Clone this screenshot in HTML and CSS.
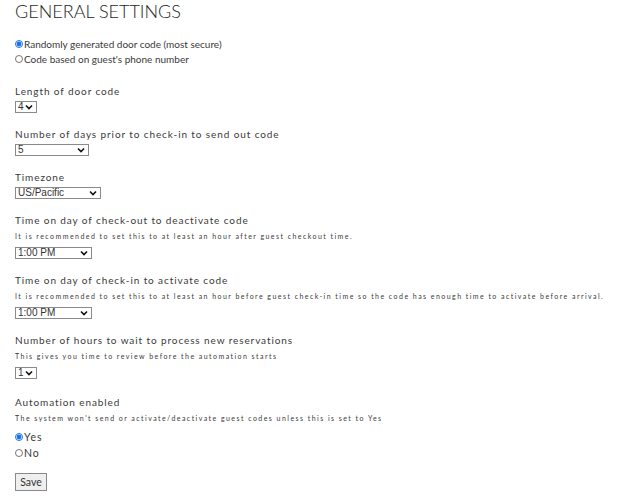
FILE: index.html
```html
<!DOCTYPE html>
<html>
  <head>
    <link rel="stylesheet" href="styles.css">
  </head>
  <body>
    <div class="settings">
      <h1>GENERAL SETTINGS</h1>

      <div class="choices top-choices">
        <label class="choice"><input type="radio" name="codetype" checked>Randomly generated door code (most secure)</label>
        <label class="choice"><input type="radio" name="codetype">Code based on guest's phone number</label>
      </div>

      <div class="field">
        <div class="label">Length of door code</div>
        <select class="sel sel-xs"><option>4</option></select>
      </div>

      <div class="field">
        <div class="label">Number of days prior to check-in to send out code</div>
        <select class="sel sel-md"><option>5</option></select>
      </div>

      <div class="field">
        <div class="label">Timezone</div>
        <select class="sel sel-lg"><option>US/Pacific</option></select>
      </div>

      <div class="field">
        <div class="label">Time on day of check-out to deactivate code</div>
        <div class="hint">It is recommended to set this to at least an hour after guest checkout time.</div>
        <select class="sel sel-time"><option>1:00 PM</option></select>
      </div>

      <div class="field">
        <div class="label">Time on day of check-in to activate code</div>
        <div class="hint">It is recommended to set this to at least an hour before guest check-in time so the code has enough time to activate before arrival.</div>
        <select class="sel sel-time"><option>1:00 PM</option></select>
      </div>

      <div class="field">
        <div class="label">Number of hours to wait to process new reservations</div>
        <div class="hint">This gives you time to review before the automation starts</div>
        <select class="sel sel-xs"><option>1</option></select>
      </div>

      <div class="field auto">
        <div class="label">Automation enabled</div>
        <div class="hint">The system won't send or activate/deactivate guest codes unless this is set to Yes</div>
        <div class="choices spaced">
          <label class="choice"><input type="radio" name="auto" checked>Yes</label>
          <label class="choice"><input type="radio" name="auto">No</label>
        </div>
      </div>

      <button class="save">Save</button>
    </div>
  </body>
</html>
```

FILE: styles.css
```css
/* reset */
* { margin: 0; padding: 0; box-sizing: border-box; }

body {
  background: white;
  color: #3a3a3a;
  font-family: "Lato", "Noto Sans", sans-serif;
}

.settings { padding: 0 15px; }

h1 {
  font-size: 18px;
  font-weight: 300;
  line-height: 22px;
  color: #1e1e1e;
  letter-spacing: 0;
}

/* radio rows */
.choices { display: flex; flex-direction: column; }
.top-choices { margin-top: 14px; }
.choice {
  display: flex;
  align-items: center;
  height: 15px;
  font-size: 10px;
}
.spaced .choice { height: 16px; letter-spacing: 1px; font-size: 10.5px; }
.choice input {
  width: 8px;
  height: 8px;
  margin: 0 1px 0 0;
  accent-color: #1a73e8;
}

/* fields */
.field { margin-top: 14px; }
.top-choices + .field { margin-top: 18px; }
.auto { margin-top: 16px; }
.label {
  font-size: 10px;
  line-height: 14px;
  letter-spacing: 0.9px;
  margin-bottom: 3px;
}
.hint {
  font-size: 7px;
  line-height: 10px;
  letter-spacing: 1.45px;
  margin: 4px 0 6px;
}

.sel {
  display: block;
  appearance: none;
  height: 12px;
  border: 1px solid #8a8a8a;
  border-radius: 0;
  background: white url("data:image/svg+xml,%3Csvg xmlns='http://www.w3.org/2000/svg' width='8' height='6'%3E%3Cpath d='M1 1.5l3 3 3-3' fill='none' stroke='%23111' stroke-width='1.6'/%3E%3C/svg%3E") no-repeat right 3px center;
  font-family: "Liberation Sans", sans-serif;
  font-size: 10px;
  line-height: 10px;
  padding: 0 0 0 2px;
  color: #333;
}
.sel-xs { width: 22px; }
.sel-md { width: 74px; }
.sel-lg { width: 86px; }
.sel-time { width: 77px; }

.save {
  margin-top: 12px;
  width: 32px;
  height: 18px;
  border: 1px solid #8a8a8a;
  background: #efefef;
  font-family: "Lato", sans-serif;
  font-size: 10.5px;
  color: #333;
}
```
